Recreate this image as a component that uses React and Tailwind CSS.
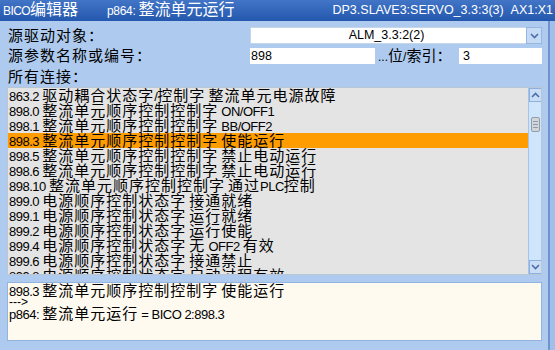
import React from "react";

const rows = [
  "863.2 驱动耦合状态字/控制字 整流单元电源故障",
  "898.0 整流单元顺序控制控制字 ON/OFF1",
  "898.1 整流单元顺序控制控制字 BB/OFF2",
  "898.3 整流单元顺序控制控制字 使能运行",
  "898.5 整流单元顺序控制控制字 禁止电动运行",
  "898.6 整流单元顺序控制控制字 禁止电动运行",
  "898.10 整流单元顺序控制控制字 通过PLC控制",
  "899.0 电源顺序控制状态字 接通就绪",
  "899.1 电源顺序控制状态字 运行就绪",
  "899.2 电源顺序控制状态字 运行使能",
  "899.4 电源顺序控制状态字 无 OFF2 有效",
  "899.6 电源顺序控制状态字 接通禁止",
  "899.8 电源顺序控制状态字 启动过程有效",
];

const CJK = /([\u3000-\u9fff\uff00-\uffef]+)/;

// latin bits in the HMI font are much narrower than the hanzi, so split the runs
function Mixed({ text, cjk, latin }) {
  return text.split(CJK).map((part, i) =>
    part === "" ? null : (
      <span key={i} className={CJK.test(part) ? cjk : latin}>
        {part}
      </span>
    )
  );
}

function Chevron({ up }) {
  return (
    <svg width="9" height="6" viewBox="0 0 9 6" className="block">
      <path
        d={up ? "M1 5 L4.5 1.5 L8 5" : "M1 1 L4.5 4.5 L8 1"}
        fill="none"
        stroke="#4d6fa8"
        strokeWidth="1.6"
      />
    </svg>
  );
}

function ArrowButton({ up }) {
  return (
    <div className="h-[14px] w-[13px] flex items-center justify-center bg-[#c9def6] border border-[#8eb0dc]">
      <Chevron up={up} />
    </div>
  );
}

export default function App() {
  return (
    <div className="w-[555px] h-[350px] overflow-hidden flex flex-col bg-[#aecbef] text-black font-['Liberation_Sans','Noto_Sans_CJK_SC',sans-serif]">
      {/* title bar */}
      <div className="h-[21px] flex items-center justify-between pl-[3px] pr-[2px] text-white bg-gradient-to-b from-[#4275c6] to-[#2458ae] whitespace-nowrap leading-[21px]">
        <div className="flex items-center">
          <span className="w-[104px]">
            <Mixed text="BICO编辑器" cjk="text-[16px]" latin="text-[12px] tracking-[-0.6px]" />
          </span>
          <span>
            <Mixed text="p864: 整流单元运行" cjk="text-[16px]" latin="text-[12px] tracking-[-0.3px]" />
          </span>
        </div>
        <span className="text-[12.5px]">DP3.SLAVE3:SERVO_3.3:3(3)&nbsp;&nbsp;AX1:X1</span>
      </div>

      <div className="flex-1 flex">
        <div className="flex-1 flex flex-col pl-[7px] pr-[6px]">
          {/* source object */}
          <div className="mt-[6px] h-[17px] flex items-center">
            <div className="w-[243px] pl-[1px] text-[15px] tracking-[1px] leading-[17px]">源驱动对象：</div>
            <div className="flex-1 h-[17px] bg-white border-y border-l border-[#c6d6ea] text-center text-[12.5px] leading-[15px] pr-[4px]">
              ALM_3.3:2(2)
            </div>
            <div className="w-[16px] h-[17px] flex items-center justify-center bg-[#c4daf5] border border-[#97b6df]">
              <Chevron />
            </div>
          </div>

          {/* source parameter */}
          <div className="mt-[4px] h-[16px] flex items-center">
            <div className="w-[243px] pl-[1px] text-[15px] tracking-[1px] leading-[16px]">源参数名称或编号：</div>
            <div className="w-[125px] h-[16px] bg-white pl-[1px] text-[12.5px] leading-[16px]">898</div>
            <div className="w-[84px] pl-[3px] leading-[16px] whitespace-nowrap">
              <Mixed text="...位/索引：" cjk="text-[15px]" latin="text-[12px]" />
            </div>
            <div className="flex-1 h-[16px] bg-white pl-[4px] text-[12.5px] leading-[16px]">3</div>
          </div>

          <div className="mt-[5px] h-[15px] pl-[1px] text-[15px] tracking-[1px] leading-[15px]">所有连接：</div>

          {/* connection list */}
          <div className="mt-[3px] h-[188px] flex bg-[#e4e4e4] border border-[#b9c6d6] overflow-hidden">
            <div className="flex-1 overflow-hidden">
              {rows.map((r, i) => (
                <div
                  key={r}
                  className={
                    i === 3
                      ? "h-[15px] leading-[15px] pl-[1px] whitespace-nowrap bg-[#ff9d00]"
                      : "h-[15px] leading-[15px] pl-[1px] whitespace-nowrap"
                  }
                >
                  <Mixed
                    text={r}
                    cjk="text-[15px] tracking-[1px]"
                    latin="text-[13px] tracking-[-0.5px]"
                  />
                </div>
              ))}
            </div>
            <div className="w-[13px] flex flex-col bg-[#cfe5fb] border-l border-[#a6c4ea]">
              <ArrowButton up />
              <div className="flex-1 relative">
                <div className="absolute left-[2px] top-[15px] w-[9px] h-[15px] rounded-[2px] bg-[#d3d6d9] border border-[#8e9cab] flex flex-col justify-center items-center gap-[2px]">
                  <div className="w-[5px] h-px bg-[#8e9cab]" />
                  <div className="w-[5px] h-px bg-[#8e9cab]" />
                  <div className="w-[5px] h-px bg-[#8e9cab]" />
                </div>
              </div>
              <ArrowButton />
            </div>
          </div>

          {/* detail box */}
          <div className="mt-[7px] h-[59px] bg-[#fffaf0] border border-[#93b4df] pl-[1px] pt-[2px] whitespace-nowrap">
            <div className="h-[12px] leading-[12px]">
              <Mixed
                text="898.3 整流单元顺序控制控制字 使能运行"
                cjk="text-[15px] tracking-[1px]"
                latin="text-[13px] tracking-[-0.5px]"
              />
            </div>
            <div className="h-[10px] leading-[10px] text-[12px]">---&gt;</div>
            <div className="h-[13px] leading-[13px]">
              <Mixed
                text="p864: 整流单元运行 = BICO 2:898.3"
                cjk="text-[15px] tracking-[1px]"
                latin="text-[13px] tracking-[-0.5px]"
              />
            </div>
          </div>
        </div>
        <div className="w-[2px] bg-[#6f93cf]" />
        <div className="w-[5px] bg-[#a0c0ea]" />
      </div>
    </div>
  );
}
